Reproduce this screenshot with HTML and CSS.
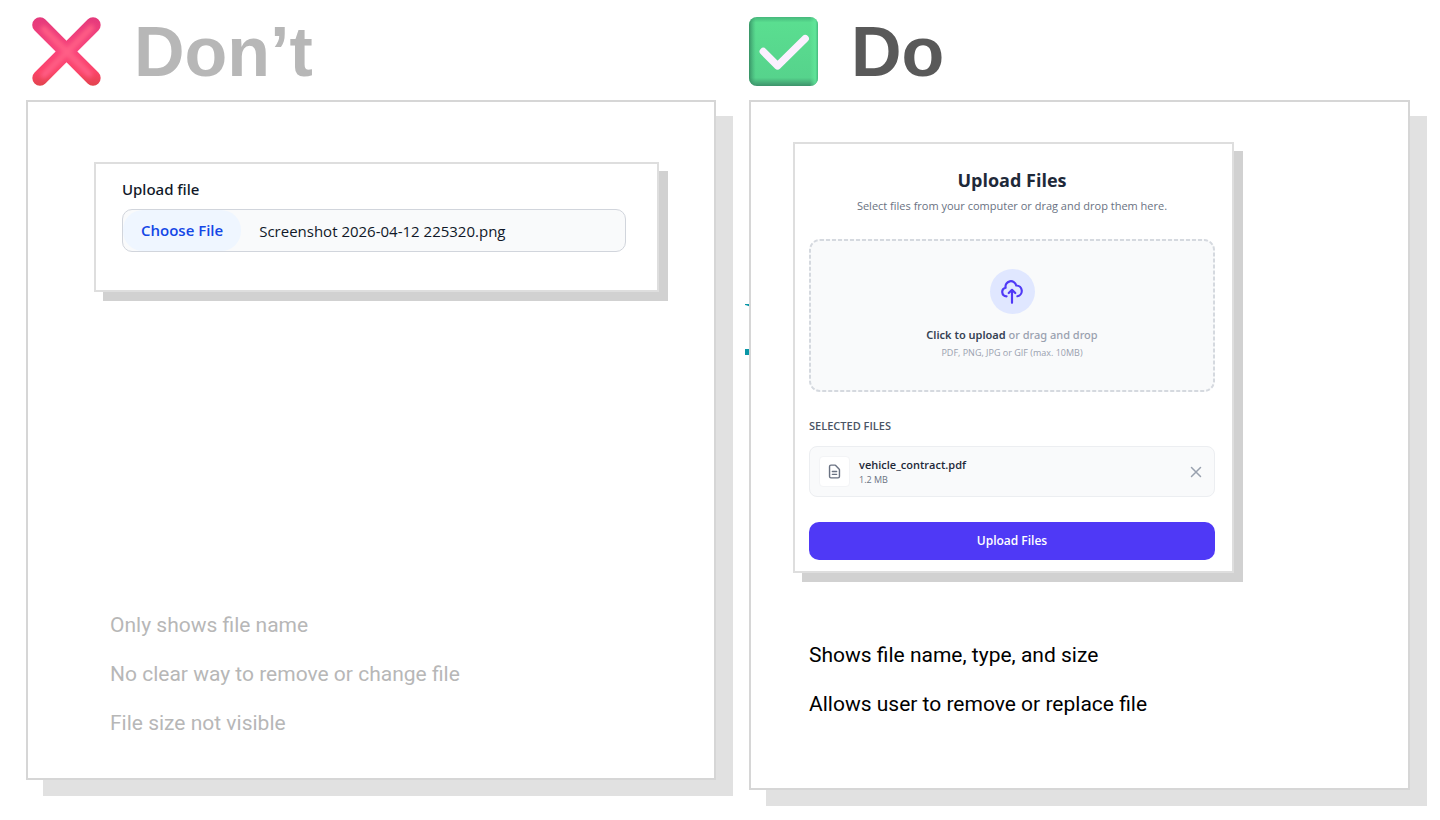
FILE: index.html
```html
<!DOCTYPE html>
<html lang="en">
<head>
<meta charset="utf-8">
<title>File upload: do and don't</title>
<link rel="stylesheet" href="styles.css">
</head>
<body>
<main class="compare">
  <section class="side side-dont">
    <header class="side-head">
      <svg class="mark" viewBox="0 0 70 70" aria-hidden="true">
        <defs>
          <linearGradient id="crossFill" x1="0" y1="0" x2="0" y2="1">
            <stop offset="0" stop-color="#e43a7c"/>
            <stop offset=".5" stop-color="#f9447a"/>
            <stop offset=".8" stop-color="#fb4368"/>
            <stop offset="1" stop-color="#e2444e"/>
          </linearGradient>
          <filter id="soft" x="-20%" y="-20%" width="140%" height="140%"><feGaussianBlur stdDeviation="2"/></filter>
        </defs>
        <path fill="url(#crossFill)" d="M2.600 2.600a7.500 7.500 0 0 1 11 0L35 24 56.400 2.600a7.500 7.500 0 0 1 11 11L46 35 67.400 56.400a7.500 7.500 0 0 1-11 11L35 46 13.600 67.400a7.500 7.500 0 0 1-11-11L24 35 2.600 13.600a7.500 7.500 0 0 1 0-11z"/>
        <path filter="url(#soft)" fill="none" stroke="#ff5f86" stroke-width="6" stroke-linecap="round" d="M12 12l46 46M60 11L12 59"/>
      </svg>
      <h2 class="side-title">Don’t</h2>
    </header>
    <div class="card">
      <div class="panel panel-simple">
        <label class="field-label" for="simple-file">Upload file</label>
        <div class="file-field">
          <input class="hidden-input" type="file" id="simple-file">
          <label class="choose" for="simple-file">Choose File</label>
          <span class="file-value">Screenshot 2026-04-12 225320.png</span>
        </div>
      </div>
      <ul class="notes">
        <li>Only shows file name</li>
        <li>No clear way to remove or change file</li>
        <li>File size not visible</li>
      </ul>
    </div>
  </section>

  <section class="side side-do">
    <svg class="accent" viewBox="0 0 6 54" aria-hidden="true">
      <path fill="#0a97a7" d="M0 0h6v3L2 1.500 0 1zM0 45h6v6H0z"/>
    </svg>
    <header class="side-head">
      <svg class="mark" viewBox="0 0 70 70" aria-hidden="true">
        <defs>
          <linearGradient id="edgeV" x1="0" y1="0" x2="0" y2="1">
            <stop offset="0" stop-color="#46b87c"/>
            <stop offset=".08" stop-color="#5ade90"/>
            <stop offset=".88" stop-color="#56d38c"/>
            <stop offset="1" stop-color="#3d936b"/>
          </linearGradient>
          <linearGradient id="edgeH" x1="0" y1="0" x2="1" y2="0">
            <stop offset="0" stop-color="#2f7f5a" stop-opacity=".8"/>
            <stop offset=".1" stop-color="#3fa574" stop-opacity="0"/>
            <stop offset=".88" stop-color="#62e79b" stop-opacity="0"/>
            <stop offset=".96" stop-color="#62e79b" stop-opacity=".8"/>
            <stop offset="1" stop-color="#44b87c"/>
          </linearGradient>
        </defs>
        <rect width="70" height="70" rx="8" fill="url(#edgeV)"/>
        <rect width="70" height="70" rx="8" fill="url(#edgeH)"/>
        <path d="M14.500 35L29 49.500 57 22" fill="none" stroke="#fbf0ff" stroke-width="7.500" stroke-linecap="round" stroke-linejoin="round"/>
      </svg>
      <h2 class="side-title">Do</h2>
    </header>
    <div class="card">
      <form class="panel panel-upload">
        <h3 class="upload-title">Upload Files</h3>
        <p class="upload-sub">Select files from your computer or drag and drop them here.</p>
        <input class="hidden-input" type="file" id="drop-file">
        <label class="dropzone" for="drop-file">
          <svg class="dashes" aria-hidden="true"><rect x="1" y="1" rx="10"/></svg>
          <span class="cloud">
            <svg viewBox="0 0 24 24" aria-hidden="true">
              <path d="M7 16a4 4 0 0 1-.88-7.903A5 5 0 1 1 15.900 6H16a5 5 0 0 1 1 9.900M15 13l-3-3m0 0l-3 3m3-3v12"/>
            </svg>
          </span>
          <span class="drop-text"><strong>Click to upload</strong> or drag and drop</span>
          <span class="drop-hint">PDF, PNG, JPG or GIF (max. 10MB)</span>
        </label>
        <h4 class="list-title">SELECTED FILES</h4>
        <div class="file-row">
          <span class="doc">
            <svg viewBox="0 0 24 24" aria-hidden="true">
              <path d="M9 12h6m-6 4h6m2 5H7a2 2 0 0 1-2-2V5a2 2 0 0 1 2-2h5.600a1 1 0 0 1 .7.3l5.400 5.400a1 1 0 0 1 .3.7V19a2 2 0 0 1-2 2z"/>
            </svg>
          </span>
          <div class="file-info">
            <span class="file-name">vehicle_contract.pdf</span>
            <span class="file-size">1.2 MB</span>
          </div>
          <button class="remove" type="button" aria-label="Remove file">
            <svg viewBox="0 0 24 24" aria-hidden="true"><path d="M6 18L18 6M6 6l12 12"/></svg>
          </button>
        </div>
        <button class="submit" type="button">Upload Files</button>
      </form>
      <ul class="notes">
        <li>Shows file name, type, and size</li>
        <li>Allows user to remove or replace file</li>
      </ul>
    </div>
  </section>
</main>
</body>
</html>
```
FILE: styles.css
```css
* { box-sizing: border-box; }

body {
  margin: 0;
  background: #fff;
  font-family: "Open Sans", "Noto Sans", sans-serif;
}

h2, h3, h4, p, ul { margin: 0; padding: 0; }

.compare {
  display: grid;
  grid-template-columns: 690fr 661fr;
  column-gap: 33px;
  align-items: start;
  padding: 17px 30px 24px 26px;
}

.side { position: relative; }

.side-head {
  display: flex;
  align-items: center;
  gap: 33px;
  height: 69px;
  margin-bottom: 14px;
}

.mark { width: 69px; height: 69px; }

.side-dont .side-head { padding-left: 6px; }

.side-title {
  font: bold 70px/70px "Liberation Sans", Arial, sans-serif;
  color: #b7b7b7;
}

.side-do .side-title { color: #595959; }

.card {
  position: relative;
  border: 2px solid #d6d6d6;
  background: #fff;
  box-shadow: 17px 16px 0 #e1e1e1;
}

.side-dont .card { padding: 60px 55px 43px 66px; }
.side-do .card { padding: 40px 174px 72px 42px; }

.accent {
  position: absolute;
  left: -4px;
  top: 287px;
  width: 6px;
  height: 54px;
}

.panel {
  border: 2px solid #dedede;
  background: #fff;
  box-shadow: 9px 9px 0 #d1d1d1;
}

.panel-simple { padding: 14px 31px 38px 26px; }

.field-label {
  display: block;
  margin-bottom: 9px;
  font-family: "Noto Sans", "Open Sans", sans-serif;
  font-size: 15px;
  line-height: 22px;
  font-weight: 500;
  color: #101828;
}

.hidden-input {
  position: absolute;
  width: 1px;
  height: 1px;
  opacity: 0;
}

.file-field {
  display: flex;
  align-items: center;
  gap: 18px;
  border: 1px solid #d1d5dc;
  border-radius: 10px;
  background: #f9fafb;
  overflow: hidden;
}

.choose {
  padding: 0 18px;
  border-radius: 20px;
  background: #eff6ff;
  color: #1447e6;
  font-size: 15px;
  line-height: 41px;
  font-weight: 600;
}

.file-value { font-size: 15px; line-height: 24px; color: #101828; }

.notes {
  display: grid;
  gap: 25px;
  padding-left: 16px;
  list-style: none;
  font: 21px/24px Roboto, sans-serif;
}

.side-dont .notes { margin-top: 321px; color: #b7b7b7; }
.side-do .notes { margin-top: 70px; color: #000; }

.panel-upload { display: grid; padding: 22px 17px 11px 14px; }

.upload-title {
  font-size: 18px;
  line-height: 28px;
  font-weight: 700;
  text-align: center;
  color: #1e2939;
}

.upload-sub {
  margin: 4px 0 25px;
  font-size: 11px;
  line-height: 16px;
  text-align: center;
  color: #6a7282;
}

.dropzone {
  position: relative;
  display: flex;
  flex-direction: column;
  align-items: center;
  padding: 30px 16px 31px;
  border-radius: 12px;
  background: #f9fafb;
}

.dashes {
  position: absolute;
  inset: 0;
  width: 100%;
  height: 100%;
}

.dashes rect {
  width: calc(100% - 2px);
  height: calc(100% - 2px);
  fill: none;
  stroke: #d5d9df;
  stroke-width: 2;
  stroke-dasharray: 4 2;
}

.cloud {
  display: grid;
  place-items: center;
  width: 45px;
  height: 45px;
  margin-bottom: 12px;
  border-radius: 50%;
  background: #e0e7ff;
}

.cloud svg, .doc svg, .remove svg {
  fill: none;
  stroke: currentColor;
  stroke-width: 2;
  stroke-linecap: round;
  stroke-linejoin: round;
}

.cloud svg { width: 26px; height: 26px; color: #4f39f6; }

.drop-text {
  font-family: "Noto Sans", "Open Sans", sans-serif;
  font-size: 11px;
  line-height: 18px;
  font-weight: 500;
  color: #99a1af;
}
.drop-text strong { font-weight: 600; color: #364153; }
.drop-hint { font-size: 9px; line-height: 17px; color: #99a1af; }

.list-title {
  margin: 26px 0 12px;
  font-size: 11px;
  line-height: 16px;
  font-weight: 600;
  color: #4a5565;
}

.file-row {
  display: flex;
  align-items: center;
  gap: 9px;
  padding: 9px;
  border: 1px solid #eceef1;
  border-radius: 8px;
  background: #f9fafb;
}

.doc {
  display: grid;
  place-items: center;
  width: 31px;
  height: 31px;
  border: 1px solid #f3f4f6;
  border-radius: 4px;
  background: #fff;
  color: #6a7282;
}

.doc svg { width: 17px; height: 17px; }

.file-info { display: grid; flex: 1; }
.file-name { font-size: 11px; line-height: 16px; font-weight: 600; color: #1e2939; }
.file-size { font-size: 9px; line-height: 14px; color: #6a7282; }

.remove {
  display: grid;
  place-items: center;
  padding: 0;
  border: 0;
  background: none;
  color: #99a1af;
}

.remove svg { width: 18px; height: 18px; }

.submit {
  margin-top: 25px;
  padding: 0;
  border: 0;
  border-radius: 10px;
  background: #4f39f6;
  color: #fff;
  font: 600 12px/38px "Open Sans", "Noto Sans", sans-serif;
}
```
